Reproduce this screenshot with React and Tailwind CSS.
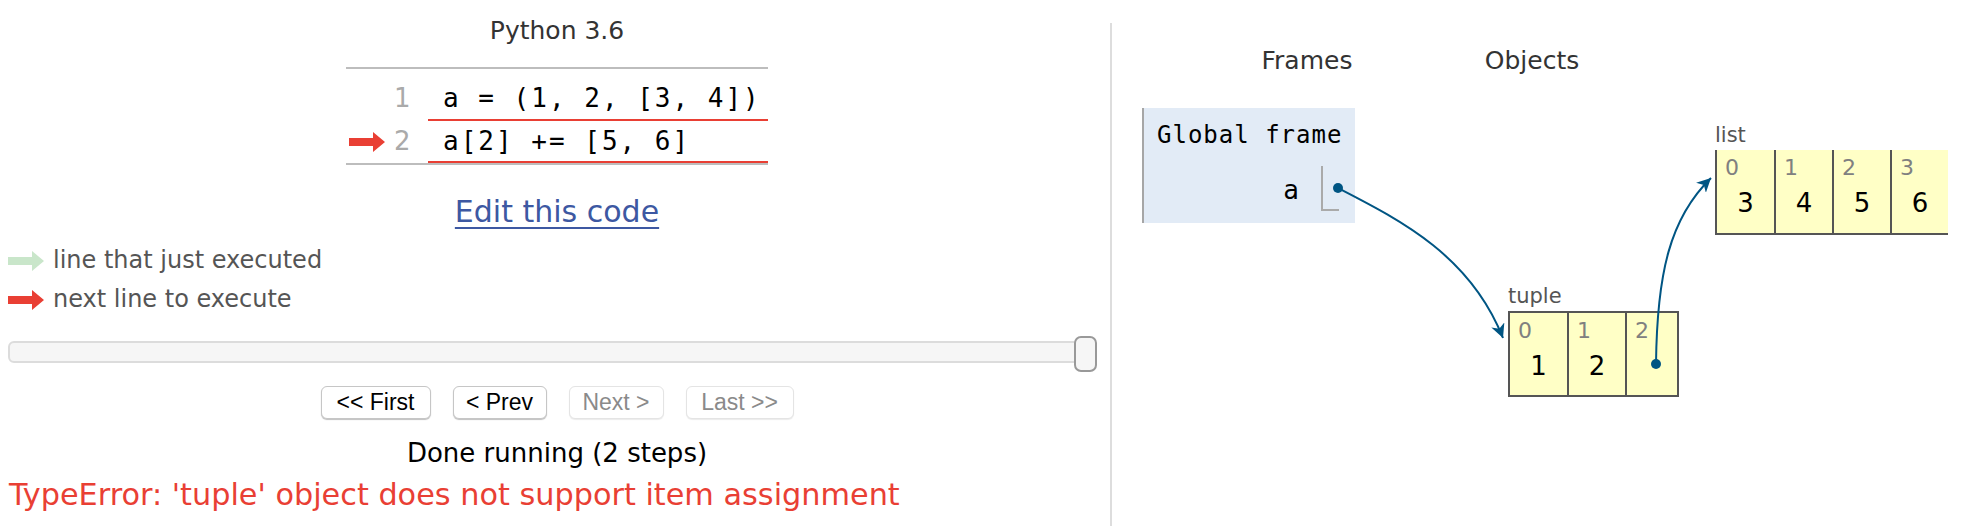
import React from 'react';

const LineArrow = ({ color }) => (
  <svg width="36" height="20" viewBox="0 0 36 20">
    <path d="M0 6 H24 V0 L36 10 L24 20 V14 H0 Z" fill={color} />
  </svg>
);

const codeLines = [
  { num: 1, text: 'a = (1, 2, [3, 4])', rowClass: 'h-[52px] pt-[9px]' },
  { num: 2, text: 'a[2] += [5, 6]', rowClass: 'h-[42px]', current: true },
];

const Cell = ({ index, value, className }) => (
  <div className={`flex flex-col bg-[#ffffc6] border-[#555] ${className}`}>
    <div className="pl-[8px] pt-[6px] text-[22px] leading-[24px] text-[#808080]">{index}</div>
    {value !== undefined && (
      <div className="mt-[8px] text-center text-[26px] leading-[30px] text-black">{value}</div>
    )}
  </div>
);

const NavButton = ({ label, width, disabled }) => (
  <button
    className={`${width} h-[33px] rounded-[6px] bg-white text-[23px] leading-[31px] font-['Liberation_Sans',Arial,sans-serif] ${
      disabled
        ? 'border border-[#e4e4e4] text-[#8a8a8a] shadow-[0_1px_1px_rgba(0,0,0,0.08)]'
        : 'border border-[#c6c6c6] text-black shadow-[0_1px_1px_rgba(0,0,0,0.25)]'
    }`}
  >
    {label}
  </button>
);

export default function App() {
  return (
    <div className="w-[1978px] h-[526px] overflow-hidden bg-white flex font-['DejaVu_Sans',Verdana,sans-serif]">
      {/* left: code + controls */}
      <div className="w-[1110px] shrink-0 flex flex-col items-center pl-[4px]">
        <div className="pt-[16px] text-[25px] leading-[30px] text-[#333]">Python 3.6</div>

        <div className="mt-[21px] w-[422px] border-t-2 border-b-2 border-[#bdbdbd]">
          {codeLines.map((line) => (
            <div key={line.num} className="flex">
              <div className="w-[48px] flex items-start pl-[3px]">
                <div className={`${line.rowClass} flex items-center`}>
                  {line.current && <LineArrow color="#e93f34" />}
                </div>
              </div>
              <div className={`w-[34px] pr-[18px] text-right text-[26px] leading-[40px] text-[#aaa] ${line.rowClass}`}>
                {line.num}
              </div>
              <div
                className={`w-[340px] pl-[15px] border-b-2 border-[#e93f34] whitespace-pre font-['DejaVu_Sans_Mono',monospace] text-[26px] leading-[40px] tracking-[2px] text-black ${line.rowClass}`}
              >
                {line.text}
              </div>
            </div>
          ))}
        </div>

        <a href="#" className="mt-[29px] text-[30px] leading-[36px] text-[#3d58a2] underline underline-offset-[5px] decoration-2">
          Edit this code
        </a>

        <div className="self-start ml-[4px] mt-[11px] flex flex-col text-[24px] leading-[39px] text-[#555]">
          <div className="flex items-center gap-[9px]">
            <LineArrow color="#c9e6ca" />
            <span>line that just executed</span>
          </div>
          <div className="flex items-center gap-[9px]">
            <LineArrow color="#e93f34" />
            <span>next line to execute</span>
          </div>
        </div>

        <div className="self-start ml-[4px] mt-[17px] relative w-[1089px] h-[36px]">
          <div className="mt-[5px] h-[22px] w-[1080px] rounded-[6px] border-2 border-[#dcdcdc] bg-[#f6f6f6]" />
          <div className="absolute right-0 top-0 w-[23px] h-[36px] rounded-[7px] border-2 border-[#999] bg-[#f6f6f6]" />
        </div>

        <div className="mt-[14px] flex gap-[22px]">
          <NavButton label="<< First" width="w-[110px]" />
          <NavButton label="< Prev" width="w-[94px]" />
          <NavButton label="Next >" width="w-[95px]" disabled />
          <NavButton label="Last >>" width="w-[108px]" disabled />
        </div>

        <div className="mt-[18px] text-[26px] leading-[32px] text-black">Done running (2 steps)</div>

        <div className="self-start ml-[5px] mt-[9px] text-[30.3px] leading-[34px] text-[#e93f34] whitespace-nowrap">
          TypeError: 'tuple' object does not support item assignment
        </div>
      </div>

      {/* right: frames + objects */}
      <div className="relative mt-[23px] h-[503px] flex-1 border-l-2 border-[#dddddd]">
        <div className="pt-[23px] flex text-[25px] leading-[30px] text-[#333]">
          <div className="w-[390px] flex justify-center">Frames</div>
          <div className="w-[60px] flex justify-center">Objects</div>
        </div>

        <div className="ml-[30px] mt-[32px] w-[213px] h-[115px] bg-[#e2ebf6] border-l-2 border-[#a6a6a6]">
          <div className="pl-[13px] pt-[12px] font-['DejaVu_Sans_Mono',monospace] text-[24px] leading-[30px] tracking-[1px] text-black">
            Global frame
          </div>
          <div className="mt-[16px] flex items-center justify-end pr-[16px] gap-[22px]">
            <span className="mt-[3px] font-['DejaVu_Sans_Mono',monospace] text-[26px] leading-[30px] text-black">a</span>
            <div className="w-[18px] h-[45px] border-l-2 border-b-2 border-[#aaa]" />
          </div>
        </div>

        {/* list object */}
        <div className="absolute left-[603px] top-[100px] flex flex-col">
          <div className="text-[21px] leading-[24px] text-[#555]">list</div>
          <div className="mt-[3px] flex h-[85px]">
            <Cell index="0" value="3" className="w-[59px] border-l-2 border-b-2" />
            <Cell index="1" value="4" className="w-[58px] border-l-2 border-b-2" />
            <Cell index="2" value="5" className="w-[58px] border-l-2 border-b-2" />
            <Cell index="3" value="6" className="w-[58px] border-l-2 border-b-2" />
          </div>
        </div>

        {/* tuple object */}
        <div className="absolute left-[396px] top-[261px] flex flex-col">
          <div className="text-[21px] leading-[24px] text-[#555]">tuple</div>
          <div className="mt-[3px] flex h-[86px]">
            <Cell index="0" value="1" className="w-[59px] border-l-2 border-t-2 border-b-2" />
            <Cell index="1" value="2" className="w-[58px] border-l-2 border-t-2 border-b-2" />
            <Cell index="2" className="w-[54px] border-l-2 border-r-2 border-t-2 border-b-2" />
          </div>
        </div>

        {/* pointers */}
        <svg className="absolute left-0 top-0 pointer-events-none" width="866" height="503" viewBox="0 0 866 503">
          <defs>
            <marker id="ah" markerWidth="16" markerHeight="14" refX="14" refY="7" orient="auto" markerUnits="userSpaceOnUse">
              <path d="M0 0 L14 7 L0 14 L4 7 Z" fill="#005583" />
            </marker>
          </defs>
          <path d="M226 165 C 288 197, 358 232, 391 315" fill="none" stroke="#005583" strokeWidth="2" markerEnd="url(#ah)" />
          <path d="M544 341 C 545 250, 558 195, 599 155" fill="none" stroke="#005583" strokeWidth="2" markerEnd="url(#ah)" />
          <circle cx="226" cy="165" r="5" fill="#005583" />
          <circle cx="544" cy="341" r="5" fill="#005583" />
        </svg>
      </div>
    </div>
  );
}
